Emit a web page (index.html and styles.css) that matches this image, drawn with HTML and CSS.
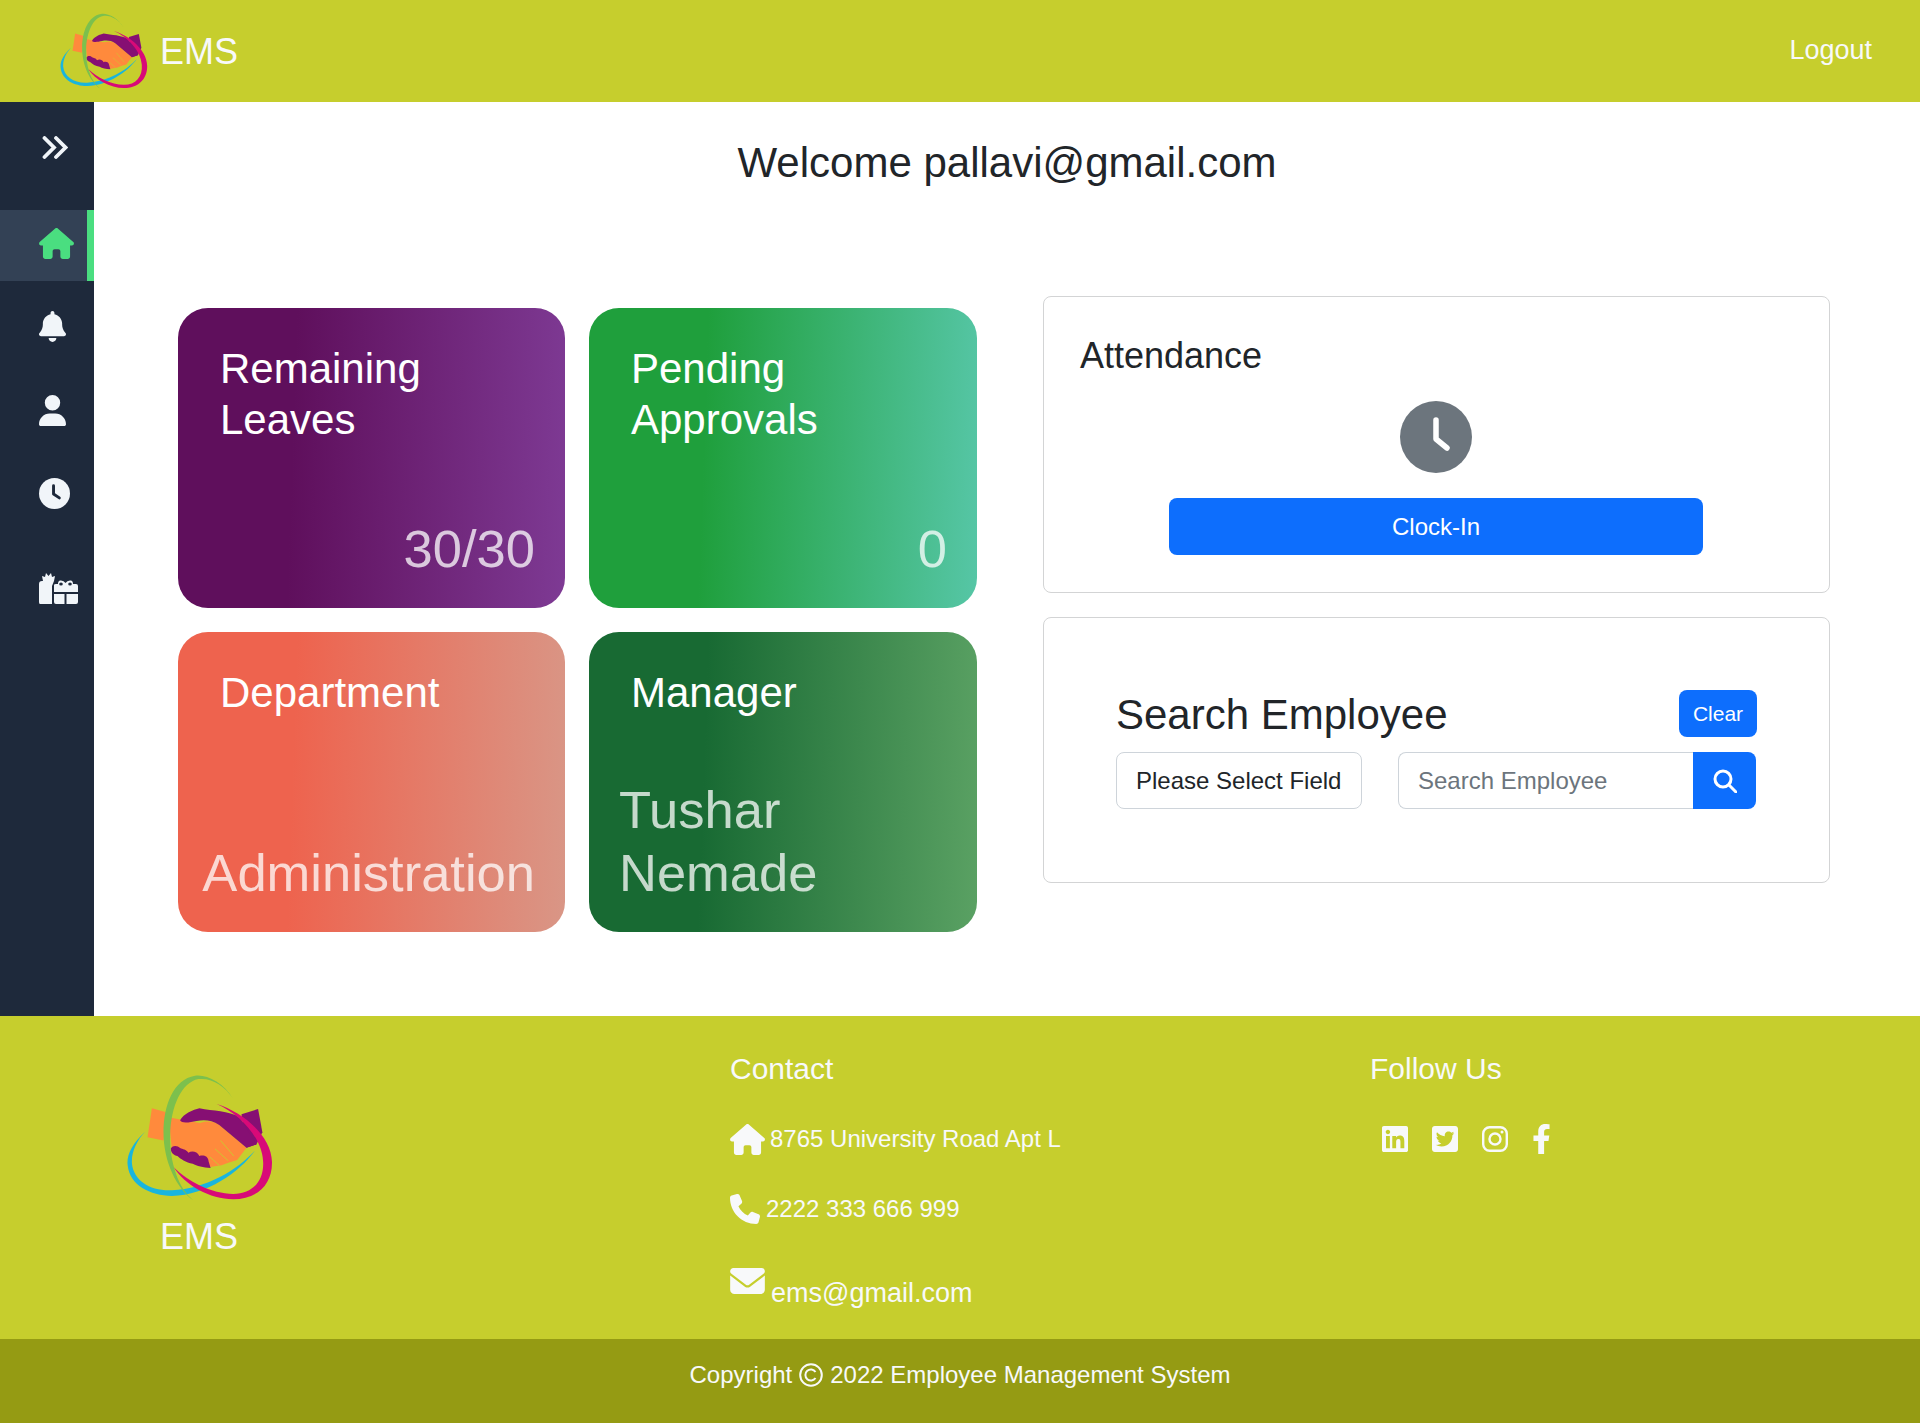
FILE: index.html
```html
<!DOCTYPE html>
<html lang="en">
<head>
<meta charset="utf-8">
<title>EMS</title>
<link rel="stylesheet" href="styles.css">
</head>
<body>
<svg class="defs" width="0" height="0" aria-hidden="true">
  <symbol id="logo" viewBox="80 75 440 382">
    <path fill="#ff8a3c" d="M155 178 L198 190 L190 275 L142 265 Z"/>
    <path fill="#860f73" d="M425 196 L475 180 L488 250 L470 287 L440 297 Z"/>
    <path fill="#ff8a3c" d="M205 205 L240 212 L300 222 C325 214 345 218 358 228 L440 297 L412 334 L385 342 L365 350 L330 355 L215 298 Z"/>
    <path fill="none" stroke="#c6ce2d" stroke-width="2.500" d="M362 275 L402 322 M345 300 L385 336 M330 325 L358 350"/>
    <path fill="#860f73" d="M240 214 C250 195 280 182 298 178 C340 186 385 186 420 205 L470 287 L440 297 L358 228 C335 212 310 212 290 216 C270 220 245 225 240 214 Z"/>
    <path fill="#860f73" d="M212 300 C214 290 232 288 240 298 C248 302 258 302 265 312 C275 305 292 308 298 322 C310 318 325 322 326 338 L332 358 C310 356 290 352 278 345 C258 342 240 330 232 322 C222 320 212 312 212 300 Z"/>
    <path fill="#19b5dd" d="M135 248 C95 285 78 320 82 350 C88 410 150 442 215 442 C320 440 420 370 466 305 C410 365 320 420 215 425 C150 428 100 395 95 345 C92 310 110 275 135 248 Z"/>
    <path fill="#d80a78" d="M350 165 C430 190 515 260 517 340 C518 410 470 452 400 452 C330 452 255 410 220 355 C265 400 335 435 400 436 C460 436 495 395 490 335 C485 265 420 195 350 165 Z"/>
    <path fill="#7cc04d" d="M400 150 C370 100 320 75 285 80 C220 90 190 170 190 250 C190 340 230 420 280 455 C235 420 208 340 210 260 C212 170 245 100 295 90 C335 85 375 110 400 150 Z"/>
  </symbol>
  <symbol id="i-home" viewBox="0 0 576 512"><path d="M575.8 255.5c0 18-15 32.1-32 32.1h-32l.7 160.2c0 2.7-.2 5.4-.5 8.1V472c0 22.1-17.9 40-40 40H456c-1.1 0-2.2 0-3.3-.1c-1.4 .1-2.8 .1-4.2 .1H416 392c-22.1 0-40-17.9-40-40V448 384c0-17.7-14.3-32-32-32H256c-17.7 0-32 14.3-32 32v64 24c0 22.1-17.9 40-40 40H160 128.1c-1.5 0-3-.1-4.5-.2c-1.2 .1-2.4 .2-3.6 .2H104c-22.1 0-40-17.9-40-40V360c0-.9 0-1.9 .1-2.8V287.6H32c-18 0-32-14-32-32.1c0-9 3-17 10-24L266.4 8c7-7 15-8 22-8s15 2 21 7L564.8 231.5c8 7 12 15 11 24z"/></symbol>
</svg>

<header class="topbar">
  <div class="brand">
    <svg class="brand-logo"><use href="#logo"/></svg>
    <span class="brand-name">EMS</span>
  </div>
  <a class="logout">Logout</a>
</header>

<div class="shell">
  <nav class="sidebar">
    <div class="side-toggle">
      <svg class="ic-chevrons" viewBox="0 0 26 23"><path d="M2.5 2 L12 11.5 L2.5 21 M14 2 L23.5 11.5 L14 21"/></svg>
    </div>
    <div class="side-active"><svg class="ic-home"><use href="#i-home"/></svg></div>
    <div class="side-list">
      <svg class="ic-side" viewBox="0 0 448 512"><path d="M224 0c-17.7 0-32 14.3-32 32V51.2C119 66 64 130.6 64 208v18.8c0 47-17.3 92.4-48.5 127.6l-7.4 8.3c-8.4 9.4-10.4 22.9-5.3 34.4S19.4 416 32 416H416c12.6 0 24-7.4 29.2-18.9s3.1-25-5.3-34.4l-7.4-8.3C401.3 319.2 384 273.9 384 226.8V208c0-77.4-55-142-128-156.8V32c0-17.7-14.3-32-32-32zm45.3 493.3c12-12 18.7-28.3 18.7-45.3H224 160c0 17 6.7 33.3 18.7 45.3s28.3 18.7 45.3 18.7s33.3-6.7 45.3-18.7z"/></svg>
      <svg class="ic-side" viewBox="0 0 448 512"><path d="M224 256A128 128 0 1 0 224 0a128 128 0 1 0 0 256zm-45.7 48C79.8 304 0 383.8 0 482.3C0 498.7 13.3 512 29.7 512H418.3c16.4 0 29.7-13.3 29.7-29.7C448 383.8 368.2 304 269.7 304H178.3z"/></svg>
      <svg class="ic-side ic-clock" viewBox="0 0 32 32"><circle cx="16" cy="16" r="16"/><path class="hand" d="M15 8 V16.5 L21 20.5"/></svg>
      <svg class="ic-gifts" viewBox="0 0 40 31">
        <path d="M1 31 Q0 31 0 29 V11 Q0 8 3 8 H4 L3 3 L6 4 L7 0 L9.500 3 L12 0 L13 4 L16 3 L15 8 L13 13 V31 Z"/>
        <path d="M15 12 Q15 11 17 11 H19 Q19 7 22 7.500 Q25 7.500 26.500 10 Q28 7.500 31 7.500 Q34 7 34 11 H37 Q39 11 39 13 V19 H15 Z M15 21 H25.500 V31 H17 Q15 31 15 29 Z M27.500 21 H39 V29 Q39 31 37 31 H27.500 Z"/>
        <ellipse class="gift-hole" cx="22" cy="11" rx="1.800" ry="1.500"/>
        <ellipse class="gift-hole" cx="31" cy="11" rx="1.800" ry="1.500"/>
      </svg>
    </div>
  </nav>

  <main class="content">
    <h1 class="welcome">Welcome pallavi@gmail.com</h1>
    <div class="dash">
      <section class="tiles">
        <article class="tile tile-purple">
          <h2 class="tile-title">Remaining<br>Leaves</h2>
          <p class="tile-value">30/30</p>
        </article>
        <article class="tile tile-green">
          <h2 class="tile-title">Pending<br>Approvals</h2>
          <p class="tile-value">0</p>
        </article>
        <article class="tile tile-coral">
          <h2 class="tile-title">Department</h2>
          <p class="tile-value tile-value-wide">Administration</p>
        </article>
        <article class="tile tile-forest">
          <h2 class="tile-title">Manager</h2>
          <p class="tile-value tile-value-left">Tushar<br>Nemade</p>
        </article>
      </section>
      <section class="panels">
        <div class="panel panel-attendance">
          <h3 class="panel-title">Attendance</h3>
          <svg class="big-clock" viewBox="0 0 72 72"><circle cx="36" cy="36" r="36"/><path d="M36 19 V38 L47 47"/></svg>
          <button class="btn btn-wide">Clock-In</button>
        </div>
        <div class="panel panel-search">
          <div class="search-head">
            <h3 class="search-title">Search Employee</h3>
            <button class="btn btn-clear">Clear</button>
          </div>
          <div class="search-row">
            <div class="select">Please Select Field</div>
            <div class="search-group">
              <div class="search-input">Search Employee</div>
              <button class="search-btn" aria-label="Search">
                <svg viewBox="0 0 24 24"><circle cx="10" cy="10" r="8"/><path d="M16 16 L23 23"/></svg>
              </button>
            </div>
          </div>
        </div>
      </section>
    </div>
  </main>
</div>

<footer class="footer">
  <div class="foot-brand">
    <svg class="foot-logo"><use href="#logo"/></svg>
    <span class="foot-name">EMS</span>
  </div>
  <div class="foot-contact">
    <h4 class="foot-head">Contact</h4>
    <p class="foot-line foot-address"><svg class="ic-foot-home"><use href="#i-home"/></svg>8765 University Road Apt L</p>
    <p class="foot-line foot-phone"><svg class="ic-phone" viewBox="0 0 512 512"><path d="M164.9 24.6c-7.7-18.6-28-28.5-47.4-23.2l-88 24C12.1 30.2 0 46 0 64C0 311.4 200.6 512 448 512c18 0 33.8-12.1 38.6-29.5l24-88c5.3-19.4-4.600-39.7-23.2-47.4l-96-40c-16.3-6.8-35.2-2.1-46.3 11.6L304.7 368C234.3 334.7 177.3 277.7 144 207.3L193.3 167c13.7-11.2 18.4-30 11.6-46.3l-40-96z"/></svg>2222 333 666 999</p>
    <p class="foot-line foot-mail"><svg class="ic-mail" viewBox="0 64 512 384"><path d="M48 64C21.5 64 0 85.5 0 112c0 15.1 7.1 29.3 19.2 38.4L236.8 313.6c11.4 8.5 27 8.5 38.4 0L492.8 150.4c12.1-9.1 19.2-23.3 19.2-38.4c0-26.5-21.5-48-48-48H48zM0 176V384c0 35.3 28.7 64 64 64H448c35.3 0 64-28.7 64-64V176L294.4 339.2c-22.8 17.1-54 17.1-76.8 0L0 176z"/></svg><span class="mail-text">ems@gmail.com</span></p>
  </div>
  <div class="foot-social">
    <h4 class="foot-head">Follow Us</h4>
    <div class="social-row">
      <svg class="ic-social" viewBox="0 32 448 448"><path d="M416 32H31.9C14.3 32 0 46.5 0 64.3v383.4C0 465.5 14.3 480 31.9 480H416c17.6 0 32-14.5 32-32.3V64.3c0-17.8-14.4-32.3-32-32.3zM135.4 416H69V202.2h66.5V416zm-33.2-243c-21.3 0-38.5-17.3-38.5-38.5S80.9 96 102.2 96c21.2 0 38.5 17.3 38.5 38.5 0 21.3-17.2 38.5-38.5 38.5zm282.1 243h-66.4V312c0-24.8-.5-56.7-34.5-56.7-34.6 0-39.9 27-39.9 54.9V416h-66.4V202.2h63.7v29.2h.9c8.9-16.8 30.6-34.5 62.9-34.5 67.2 0 79.7 44.3 79.7 101.9V416z"/></svg>
      <svg class="ic-social" viewBox="0 32 448 448"><path d="M400 32H48C21.5 32 0 53.5 0 80v352c0 26.5 21.5 48 48 48h352c26.5 0 48-21.5 48-48V80c0-26.5-21.5-48-48-48zm-48.9 158.8c.2 2.8.2 5.700.2 8.5 0 86.7-66 186.6-186.6 186.6-37.2 0-71.7-10.8-100.7-29.4 5.3.6 10.4.8 15.8.8 30.7 0 58.9-10.4 81.4-28-28.8-.6-53-19.5-61.3-45.5 10.1 1.5 19.2 1.5 29.6-1.2-30-6.1-52.5-32.5-52.5-64.4v-.8c8.7 4.9 18.9 7.9 29.6 8.3a65.447 65.447 0 0 1-29.2-54.6c0-12.2 3.2-23.4 8.9-33.1 32.3 39.8 80.8 65.8 135.2 68.6-9.3-44.5 24-80.6 64-80.6 18.9 0 35.9 7.9 47.9 20.7 14.8-2.8 29-8.3 41.6-15.8-4.9 15.2-15.1 28-28.6 36 13.1-1.4 25.8-5 37.6-10.1-8.9 13.1-20.1 24.7-32.9 34z"/></svg>
      <svg class="ic-social ic-insta" viewBox="0 0 26 26"><rect x="1.200" y="1.200" width="23.600" height="23.600" rx="6.500"/><circle cx="13" cy="13" r="5.500"/><circle class="dot" cx="20" cy="6" r="1.500"/></svg>
      <svg class="ic-fb" viewBox="0 0 320 512"><path d="M279.14 288l14.22-92.66h-88.91v-60.13c0-25.35 12.42-50.06 52.24-50.06h40.42V6.26S260.43 0 225.36 0c-73.22 0-121.08 44.38-121.08 124.72v70.62H22.89V288h81.39v224h100.17V288z"/></svg>
    </div>
  </div>
</footer>

<div class="copyright">
  <span>Copyright</span>
  <svg class="ic-copy" viewBox="0 0 24 24"><circle cx="12" cy="12" r="10.800"/><path d="M16.500 9 A5.500 5.500 0 1 0 16.500 15"/></svg>
  <span>2022 Employee Management System</span>
</div>
</body>
</html>
```

FILE: styles.css
```css
* { box-sizing: border-box; }

html, body { margin: 0; padding: 0; }

body {
  font-family: "Liberation Sans", Arial, sans-serif;
  color: #212529;
  background: #fff;
  width: 1920px;
}

.defs { display: block; height: 0; }

h1, h2, h3, h4, p { margin: 0; font-weight: 400; }

/* Top bar */
.topbar {
  height: 102px;
  background: #c6ce2d;
  display: flex;
  align-items: center;
  justify-content: space-between;
  padding: 0 48px 0 60px;
  color: #f8f9fa;
}

.brand { display: flex; align-items: center; }
.brand-logo { width: 88px; height: 76px; margin-right: 12px; }
.brand-name { font-size: 36px; line-height: 43px; }
.logout { font-size: 27px; line-height: 32px; margin-top: -2px; }

/* Shell */
.shell { display: flex; height: 914px; }

.sidebar {
  width: 94px;
  flex: none;
  background: #1e293b;
  color: #f1f5f9;
}

.side-toggle {
  height: 108px;
  padding: 34px 0 0 42px;
}

.ic-chevrons {
  display: block;
  width: 26px;
  height: 23px;
  fill: none;
  stroke: #f1f5f9;
  stroke-width: 3.800;
  stroke-linecap: round;
  stroke-linejoin: miter;
}

.side-active {
  height: 71px;
  background: #334155;
  border-right: 7px solid #4ade80;
  padding: 18px 0 0 39px;
}

.ic-home { display: block; width: 35px; height: 31px; fill: #4ade80; }

.side-list {
  display: flex;
  flex-direction: column;
  gap: 52.500px;
  padding: 30px 0 0 39px;
}

.ic-side { display: block; width: 27px; height: 31px; fill: #f1f5f9; }
.ic-clock { width: 31px; }
.ic-clock .hand { fill: none; stroke: #1e293b; stroke-width: 3; stroke-linecap: round; stroke-linejoin: round; }
.ic-gifts { display: block; width: 40px; height: 31px; fill: #f1f5f9; margin-top: 11px; }
.ic-gifts .gift-hole { fill: #1e293b; }

/* Content */
.content { flex: 1; min-width: 0; padding: 0 90px 0 84px; }

.welcome {
  font-size: 42px;
  line-height: 50px;
  text-align: center;
  padding-top: 36px;
  margin-left: -84px;
  margin-right: -90px;
}

.dash {
  display: grid;
  grid-template-columns: 799px 787px;
  column-gap: 66px;
  margin-top: 108px;
}

.tiles {
  display: grid;
  grid-template-columns: 387px 388px;
  grid-auto-rows: 300px;
  gap: 24px;
  padding-top: 12px;
}

.tile {
  border-radius: 30px;
  display: flex;
  flex-direction: column;
  justify-content: space-between;
  padding: 35px 30px 28px 42px;
  color: #fff;
}

.tile-purple { background: linear-gradient(92deg, #5f0f5c 30%, #7e3a94 100%); }
.tile-green { background: linear-gradient(92deg, #1f9f3c 30%, #56c6a6 100%); }
.tile-coral { background: linear-gradient(92deg, #ee634e 30%, #d99686 100%); }
.tile-forest { background: linear-gradient(92deg, #186a33 30%, #5aa163 100%); }

.tile-title { font-size: 42px; line-height: 51px; }

.tile-value {
  font-size: 52.500px;
  line-height: 62.400px;
  text-align: right;
  color: rgba(255, 255, 255, 0.75);
}

.tile-value-wide { margin-left: -20px; white-space: nowrap; }
.tile-value-left { text-align: left; margin-left: -12px; }

/* Panels */
.panels { display: flex; flex-direction: column; gap: 24px; }

.panel {
  border: 1.500px solid #d3d4d5;
  border-radius: 8px;
}

.panel-attendance {
  height: 297px;
  padding: 37px 37px 0 36px;
  display: flex;
  flex-direction: column;
}

.panel-title { font-size: 36px; line-height: 43px; }

.big-clock {
  width: 72px;
  height: 72px;
  margin: 24px auto 0;
  fill: #6c757d;
  flex: none;
}
.big-clock path { fill: none; stroke: #fff; stroke-width: 5.500; stroke-linecap: round; stroke-linejoin: round; }

.btn {
  border: 0;
  background: #0d6efd;
  color: #fff;
  font-family: inherit;
  border-radius: 8px;
  padding: 0;
}

.btn-wide {
  width: 534px;
  height: 57px;
  font-size: 24px;
  margin: 25px auto 0;
  flex: none;
}

.panel-search {
  height: 266px;
  padding: 72px 72px 0 72px;
}

.search-head { display: flex; justify-content: space-between; align-items: center; height: 47px; }
.search-title { font-size: 42px; line-height: 50px; margin-top: 2px; }
.btn-clear { width: 78px; height: 47px; font-size: 21px; }

.search-row { display: flex; gap: 36px; margin-top: 15px; }

.select {
  width: 246px;
  height: 57px;
  border: 1.500px solid #ced4da;
  border-radius: 8px;
  font-size: 24px;
  line-height: 55px;
  padding-left: 19px;
  white-space: nowrap;
}

.search-group { display: flex; flex: none; width: 358px; }

.search-input {
  flex: 1;
  height: 57px;
  border: 1.500px solid #ced4da;
  border-right: 0;
  border-radius: 8px 0 0 8px;
  font-size: 24px;
  line-height: 55px;
  padding-left: 19px;
  color: #6c757d;
  white-space: nowrap;
}

.search-btn {
  width: 63px;
  height: 57px;
  border: 0;
  padding: 0;
  background: #0d6efd;
  border-radius: 0 8px 8px 0;
  display: flex;
  align-items: center;
  justify-content: center;
}

.search-btn svg { width: 24px; height: 24px; fill: none; stroke: #fff; stroke-width: 3; stroke-linecap: round; }

/* Footer */
.footer {
  height: 322.500px;
  background: #c6ce2d;
  color: #f8f9fa;
  display: grid;
  grid-template-columns: repeat(3, 640px);
}

.foot-brand {
  display: flex;
  flex-direction: column;
  align-items: center;
  width: 146px;
  margin-left: 127px;
  padding-top: 58px;
}

.foot-logo { width: 146px; height: 127px; flex: none; }
.foot-name { font-size: 36px; line-height: 43px; margin-top: 14px; margin-right: 2px; }

.foot-contact, .foot-social { padding: 35px 0 0 90px; }

.foot-head { font-size: 30px; line-height: 36px; }

.foot-line { font-size: 24px; display: flex; align-items: center; white-space: nowrap; }

.foot-address { margin-top: 34px; height: 36px; }
.foot-phone { margin-top: 34px; height: 36px; }
.foot-mail { margin-top: 34px; height: 44px; align-items: flex-start; padding-top: 7px; }

.ic-foot-home { width: 35px; height: 31px; fill: #f8f9fa; margin-right: 5px; flex: none; }
.ic-phone { width: 30px; height: 30px; fill: #f8f9fa; margin-right: 6px; flex: none; }
.ic-mail { width: 35px; height: 26px; fill: #f8f9fa; margin-right: 6px; flex: none; }
.mail-text { font-size: 27px; line-height: 32px; margin-top: 9px; }

.social-row { display: flex; align-items: center; padding: 37px 0 0 12px; }

.ic-social { width: 26px; height: 26px; fill: #f8f9fa; margin-right: 24px; flex: none; }
.ic-insta { fill: none; stroke: #f8f9fa; stroke-width: 2.400; }
.ic-insta .dot { fill: #f8f9fa; stroke: none; }
.ic-fb { width: 19px; height: 30px; fill: #f8f9fa; }

/* Copyright */
.copyright {
  height: 84.500px;
  background: #959b13;
  color: #f8f9fa;
  font-size: 24px;
  display: flex;
  align-items: center;
  justify-content: center;
  gap: 7px;
  padding-bottom: 12px;
}

.ic-copy { width: 24px; height: 24px; fill: none; stroke: #f8f9fa; stroke-width: 2; }
```
